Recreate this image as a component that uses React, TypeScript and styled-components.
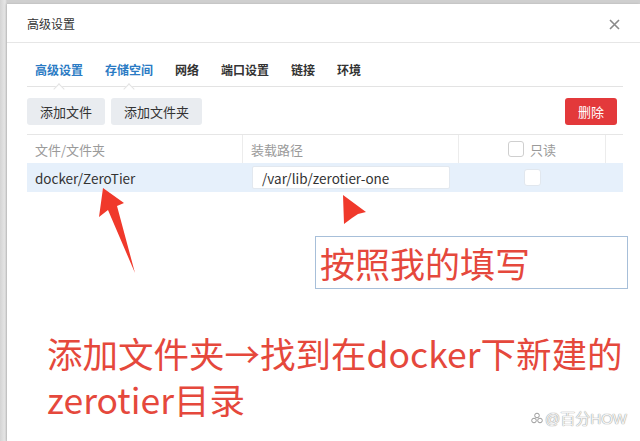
import React from "react";
import styled, { createGlobalStyle } from "styled-components";

const GlobalStyle = createGlobalStyle`
  html, body { margin: 0; padding: 0; }
  body {
    background: #dcdcdc;
    font-family: "Noto Sans CJK SC", "Noto Sans", sans-serif;
    width: 640px;
    height: 441px;
    overflow: hidden;
  }
`;

const Page = styled.div`
  position: relative;
  width: 640px;
  height: 441px;
  padding: 4px 0 0 7px;
  box-sizing: border-box;
  overflow: hidden;
  background: linear-gradient(to right, #d4d4d4 0, #e6e6e6 5px, #cfcfcf 7px);
`;

const Dialog = styled.div`
  position: relative;
  height: 100%;
  background: #fff;
  box-shadow: -1px 0 2px rgba(0, 0, 0, 0.12);
`;

const Header = styled.div`
  height: 38px;
  display: flex;
  align-items: center;
  justify-content: space-between;
  padding: 0 20px 0 20px;
  border-bottom: 1px solid #e6e6e6;
  font-size: 12px;
  color: #333;
`;

const Close = styled.svg`
  width: 11px;
  height: 11px;
  margin-top: 2px;
`;

const Content = styled.div`
  padding: 0 17px 0 20px;
`;

const TabBar = styled.div`
  position: relative;
  height: 44px;
  box-sizing: border-box;
  padding: 10px 0 0 8px;
  display: flex;
  align-items: center;
  gap: 22px;
  border-bottom: 1px solid #e3e3e3;
`;

const Tab = styled.div<{ $active?: boolean }>`
  position: relative;
  font-size: 12px;
  font-weight: 700;
  color: ${(p) => (p.$active ? "#2b7bc4" : "#333")};
  height: 34px;
  line-height: 34px;
  ${(p) =>
    p.$active
      ? `
    &::after {
      content: "";
      position: absolute;
      left: 50%;
      bottom: -1px;
      margin-left: -4px;
      width: 7px;
      height: 7px;
      background: #fff;
      border-left: 1px solid #e3e3e3;
      border-top: 1px solid #e3e3e3;
      transform: translateY(5px) rotate(45deg);
    }
  `
      : ""}
`;

const Toolbar = styled.div`
  display: flex;
  align-items: center;
  gap: 6px;
  padding: 11px 6px 9px 0;
`;

const Button = styled.div<{ $danger?: boolean }>`
  height: 27px;
  padding: 0 13px;
  display: flex;
  align-items: center;
  font-size: 13px;
  border-radius: 3px;
  background: ${(p) => (p.$danger ? "#e3393b" : "#e9ecf0")};
  color: ${(p) => (p.$danger ? "#fff" : "#333")};
  ${(p) => (p.$danger ? "margin-left: auto;" : "")}
`;

const Table = styled.div`
  display: grid;
  grid-template-columns: 216px 216px 147px 1fr;
  border-top: 1px solid #e6e6e6;
`;

const HeadCell = styled.div<{ $center?: boolean; $last?: boolean }>`
  height: 28px;
  display: flex;
  align-items: center;
  justify-content: ${(p) => (p.$center ? "center" : "flex-start")};
  gap: 6px;
  padding-left: ${(p) => (p.$center ? "0" : "8px")};
  font-size: 13px;
  color: #9a9a9a;
  border-right: ${(p) => (p.$last ? "none" : "1px solid #ececec")};
`;

const Cell = styled.div<{ $center?: boolean }>`
  height: 29px;
  display: flex;
  align-items: center;
  justify-content: ${(p) => (p.$center ? "center" : "flex-start")};
  padding-left: ${(p) => (p.$center ? "0" : "8px")};
  background: #e6f0fb;
  font-size: 13.5px;
  color: #333;
`;

const PathInput = styled.div`
  width: 198px;
  height: 23px;
  box-sizing: border-box;
  margin-left: 1px;
  padding-left: 9px;
  display: flex;
  align-items: center;
  background: #fff;
  border: 1px solid #e2e8ef;
  border-radius: 2px;
  font-size: 13.5px;
  color: #333;
`;

const Check = styled.div<{ $size?: number }>`
  width: ${(p) => p.$size ?? 16}px;
  height: ${(p) => p.$size ?? 16}px;
  box-sizing: border-box;
  background: #fff;
  border: 1px solid ${(p) => (p.$size ? "#e1e7ee" : "#cfcfcf")};
  border-radius: 3px;
`;

const NoteBox = styled.div`
  position: absolute;
  left: 308px;
  top: 232px;
  width: 313px;
  height: 53px;
  box-sizing: border-box;
  border: 1px solid #a7bfd9;
  padding-left: 4px;
  display: flex;
  align-items: center;
  font-size: 35px;
  color: #e5483c;
  line-height: 1;
`;

const BigNote = styled.div`
  position: absolute;
  left: 40px;
  top: 326px;
  font-size: 35.5px;
  line-height: 46px;
  color: #e5483c;
  white-space: nowrap;
`;

const Overlay = styled.svg`
  position: absolute;
  left: 0;
  top: 0;
  width: 640px;
  height: 441px;
  pointer-events: none;
`;

const Watermark = styled.div`
  position: absolute;
  right: 13px;
  bottom: 13px;
  display: flex;
  align-items: center;
  gap: 2px;
  font-family: "Liberation Sans", "Noto Sans CJK SC", sans-serif;
  font-size: 15px;
  color: #f4f4f4;
  text-shadow: 0 0 1px #9a9a9a, 0 0 1px #9a9a9a;
`;

export default function App() {
  const tabs = ["高级设置", "存储空间", "网络", "端口设置", "链接", "环境"];
  return (
    <Page>
      <GlobalStyle />
      <Dialog>
        <Header>
          <span>高级设置</span>
          <Close viewBox="0 0 11 11">
            <path d="M1 1L10 10M10 1L1 10" stroke="#8a8a8a" strokeWidth="1.6" />
          </Close>
        </Header>
        <Content>
          <TabBar>
            {tabs.map((t, i) => (
              <Tab key={t} $active={i < 2}>
                {t}
              </Tab>
            ))}
          </TabBar>
          <Toolbar>
            <Button>添加文件</Button>
            <Button>添加文件夹</Button>
            <Button $danger>删除</Button>
          </Toolbar>
          <Table>
            <HeadCell>文件/文件夹</HeadCell>
            <HeadCell>装载路径</HeadCell>
            <HeadCell $center>
              <Check />
              只读
            </HeadCell>
            <HeadCell $last />
            <Cell>docker/ZeroTier</Cell>
            <Cell>
              <PathInput>/var/lib/zerotier-one</PathInput>
            </Cell>
            <Cell $center>
              <Check $size={17} />
            </Cell>
            <Cell />
          </Table>
        </Content>
        <NoteBox>按照我的填写</NoteBox>
        <BigNote>
          添加文件夹→找到在docker下新建的
          <br />
          zerotier目录
        </BigNote>
      </Dialog>
      <Overlay viewBox="0 0 640 441">
        <polygon
          points="103,188 124,203 117,206 135,273 108,210 99,217"
          fill="#f0392b"
        />
        <polygon points="343,195 366,212 358,214 352,218 344,224" fill="#f0392b" />
      </Overlay>
      <Watermark>
        <svg width="12" height="12" viewBox="0 0 12 12">
          <circle cx="6" cy="3.5" r="2.3" fill="none" stroke="#9a9a9a" strokeWidth="1" />
          <circle cx="3" cy="8.5" r="2.3" fill="none" stroke="#9a9a9a" strokeWidth="1" />
          <circle cx="9" cy="8.5" r="2.3" fill="none" stroke="#9a9a9a" strokeWidth="1" />
        </svg>
        <span>@百分HOW</span>
      </Watermark>
    </Page>
  );
}
